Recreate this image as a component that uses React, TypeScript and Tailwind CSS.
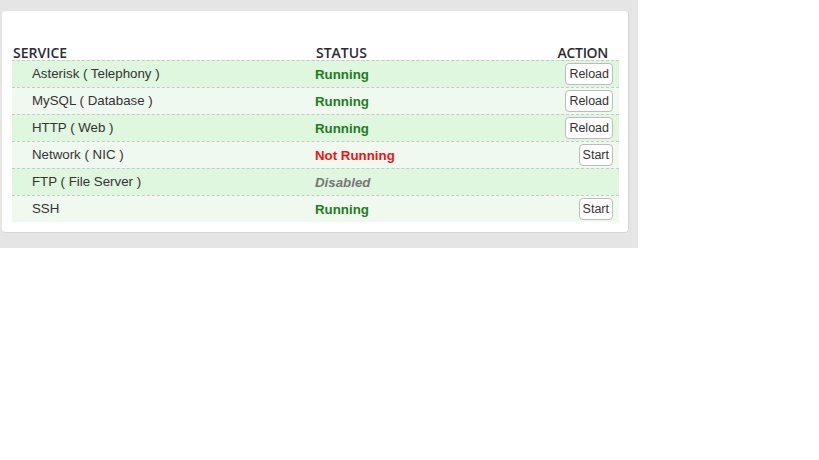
import React from "react";

type Row = { name: string; status: "Running" | "Not Running" | "Disabled"; action?: string };

const rows: Row[] = [
  { name: "Asterisk ( Telephony )", status: "Running", action: "Reload" },
  { name: "MySQL ( Database )", status: "Running", action: "Reload" },
  { name: "HTTP ( Web )", status: "Running", action: "Reload" },
  { name: "Network ( NIC )", status: "Not Running", action: "Start" },
  { name: "FTP ( File Server )", status: "Disabled" },
  { name: "SSH", status: "Running", action: "Start" },
];

function Status({ s }: { s: Row["status"] }) {
  if (s === "Running") return <span className="font-bold text-[#1f7d1f]">Running</span>;
  if (s === "Not Running") return <span className="font-bold text-[#f01414]">Not Running</span>;
  return <span className="font-bold italic text-[#777777]">Disabled</span>;
}

export default function App() {
  return (
    <div className="w-[819px] h-[460px] bg-white">
      <div className="w-[638px] h-[248px] bg-[#e5e5e5] pl-[2px] pt-[11px]">
        <div className="w-[627px] h-[222px] bg-white rounded-[4px] border-r border-b border-[#d6d6d6] pt-[34px] px-[10px]">
          <div className="w-[607px] font-['Liberation_Sans',Arial,sans-serif] text-[13.3px] text-[#333333]">
            <div className="flex items-end h-[15px] font-['Open_Sans',sans-serif] font-semibold text-[14px] text-[#2b2b33] leading-none">
              <div className="w-[303px] pl-[1px]">SERVICE</div>
              <div className="flex-1 pl-[1px]">STATUS</div>
              <div className="pr-[11px] tracking-[-0.3px]">ACTION</div>
            </div>
            {rows.map((r, i) => (
              <div
                key={r.name}
                className={`flex items-center h-[27px] border-t border-dashed border-[#c8c8c8] ${
                  i % 2 === 0 ? "bg-[#dff6df]" : "bg-[#eff9ef]"
                }`}
              >
                <div className="w-[303px] pl-[20px]">{r.name}</div>
                <div className="flex-1 pt-[2px]">
                  <Status s={r.status} />
                </div>
                <div className="pr-[6px]">
                  {r.action && (
                    <button className="h-[22px] px-[3px] bg-white border border-[#bdbdbd] rounded-[4px] text-[12.5px] text-[#333333] leading-none">
                      {r.action}
                    </button>
                  )}
                </div>
              </div>
            ))}
          </div>
        </div>
      </div>
    </div>
  );
}
